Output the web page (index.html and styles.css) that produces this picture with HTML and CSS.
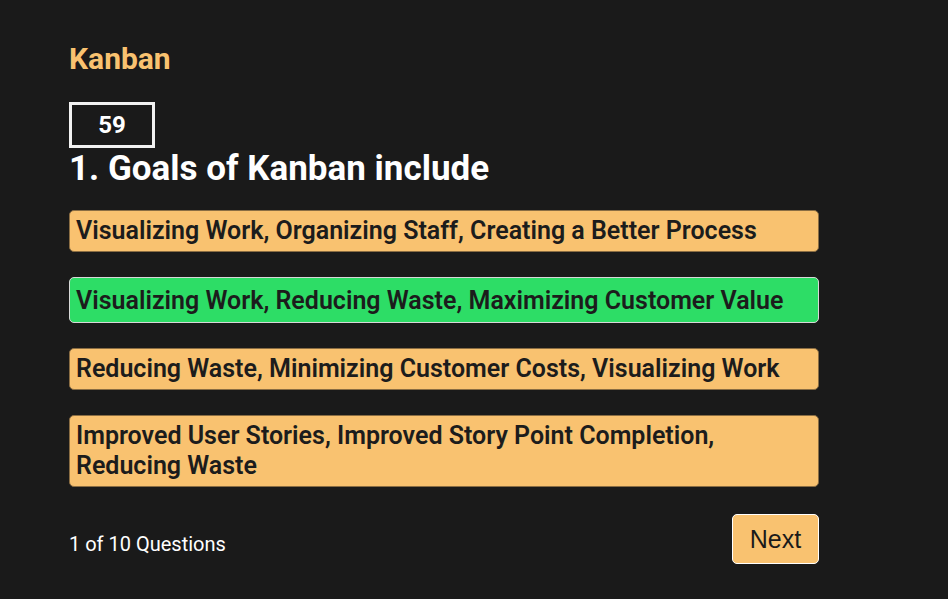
FILE: index.html
```html
<!DOCTYPE html>
<html>
<head>
<meta charset="utf-8">
<link rel="stylesheet" href="styles.css">
</head>
<body>
<main class="quiz">
  <h2 class="topic">Kanban</h2>
  <div class="timer">59</div>
  <h1 class="question">1. Goals of Kanban include</h1>
  <ul class="options">
    <li class="option">Visualizing Work, Organizing Staff, Creating a Better Process</li>
    <li class="option correct">Visualizing Work, Reducing Waste, Maximizing Customer Value</li>
    <li class="option">Reducing Waste, Minimizing Customer Costs, Visualizing Work</li>
    <li class="option">Improved User Stories, Improved Story Point Completion, Reducing Waste</li>
  </ul>
  <div class="footer">
    <span class="count">1 of 10 Questions</span>
    <button class="next">Next</button>
  </div>
</main>
</body>
</html>
```
FILE: styles.css
```css
html, body {
  margin: 0;
  background: #1a1a1a;
  font-family: Roboto, "Liberation Sans", sans-serif;
  color: #ffffff;
}
.quiz {
  width: 750px;
  padding: 40px 0 0 69px;
}
.topic {
  margin: 0;
  font-size: 30px;
  font-weight: 700;
  color: #f9c270;
  line-height: 38px;
}
.timer {
  margin-top: 24px;
  width: 80px;
  height: 40px;
  border: 3px solid #f2f2f2;
  box-sizing: content-box;
  display: flex;
  align-items: center;
  justify-content: center;
  font-size: 24px;
  font-weight: 700;
}
.question {
  margin: 0;
  font-size: 35px;
  font-weight: 700;
  line-height: 42px;
}
.options {
  list-style: none;
  margin: 20px 0 0;
  padding: 0;
  display: flex;
  flex-direction: column;
  gap: 25px;
}
.option {
  background: #f9c270;
  color: #1c1c1c;
  border: 1px solid #8a6d43;
  border-radius: 5px;
  padding: 5px 6px;
  font-size: 25px;
  font-weight: 600;
  line-height: 30px;
}
.option.correct {
  background: #2ddd66;
  border-color: #d8d8d8;
  padding: 8px 6px 6px;
}
.footer {
  margin-top: 27px;
  display: flex;
  justify-content: space-between;
  align-items: center;
}
.count {
  font-size: 20px;
  padding-top: 10px;
}
.next {
  background: #f9c270;
  border: 1px solid #ffffff;
  border-radius: 5px;
  width: 87px;
  height: 50px;
  font-family: "Liberation Sans", Arial, sans-serif;
  font-size: 25px;
  color: #1a1a1a;
  padding: 0;
}
```
